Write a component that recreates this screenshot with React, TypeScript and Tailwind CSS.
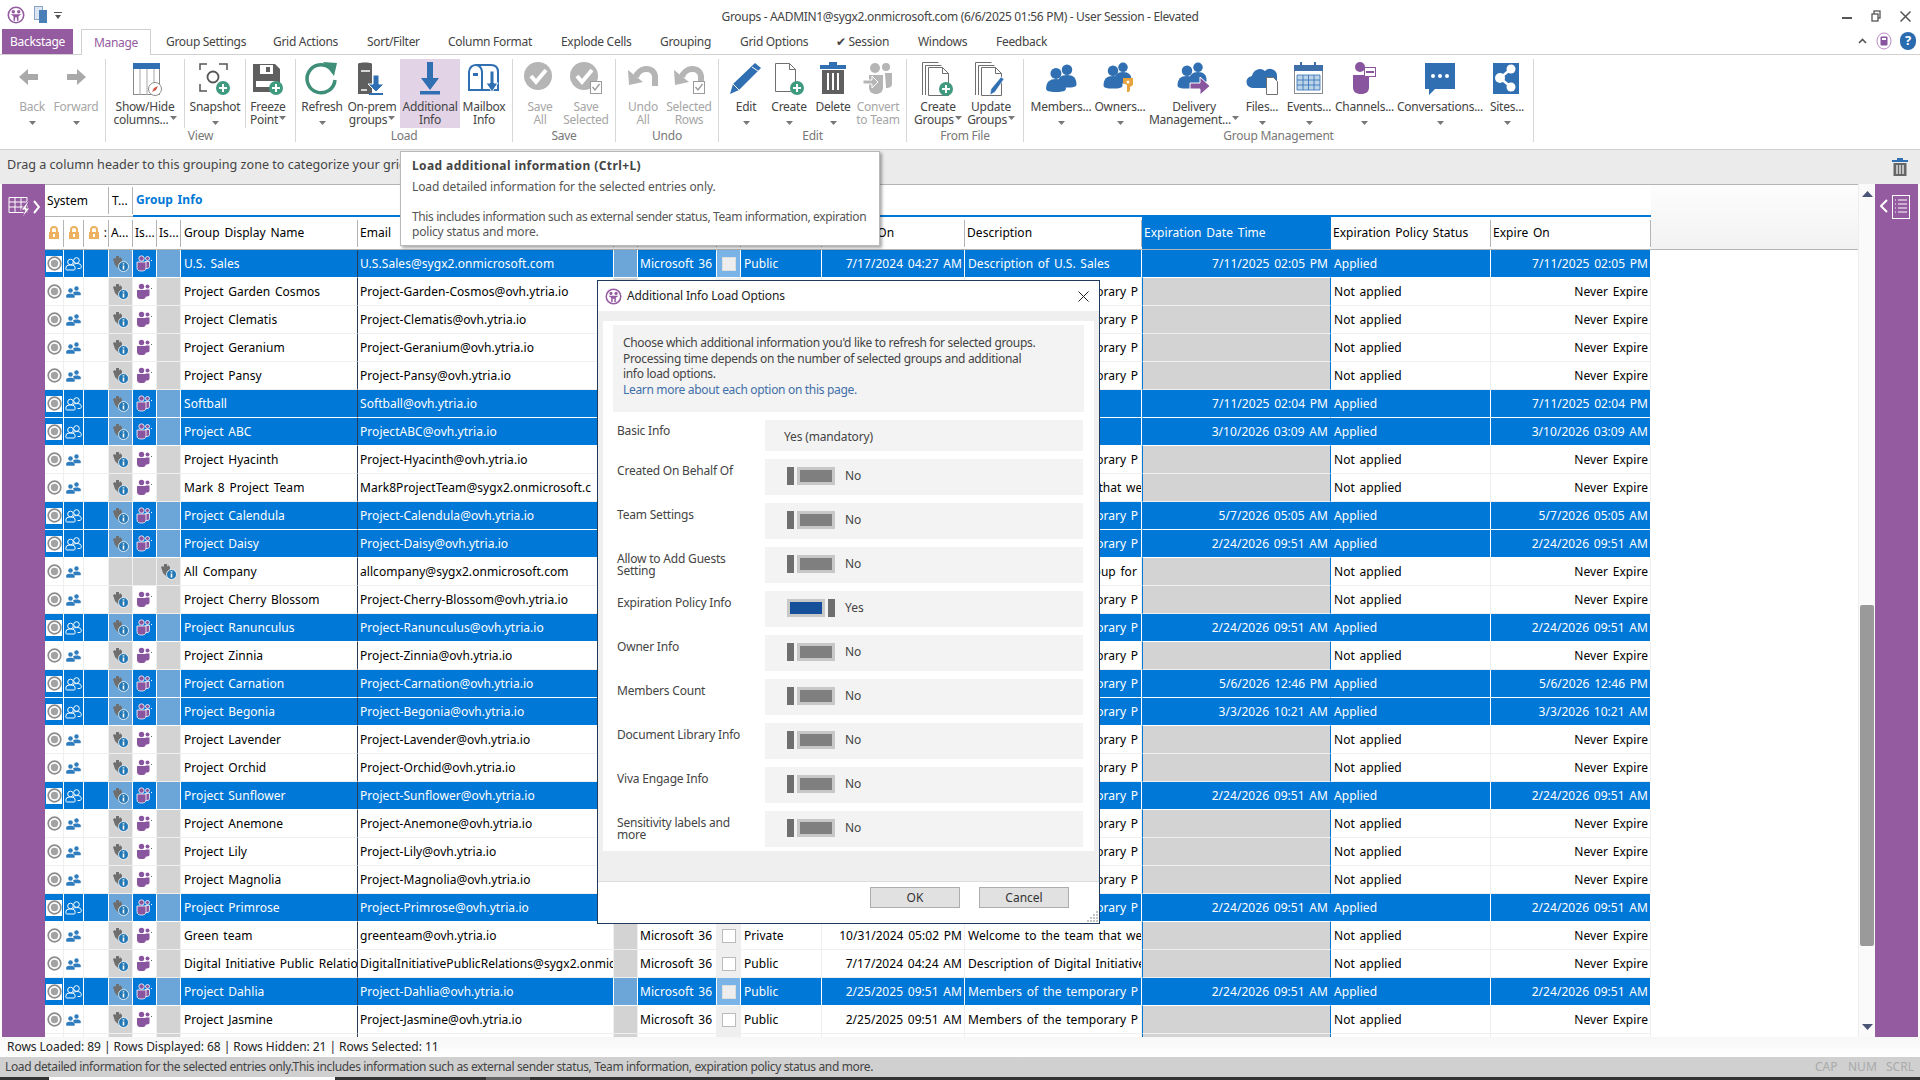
import React from 'react';
import clsx from 'clsx';

type Row = {
  name: string;
  email: string;
  sel?: boolean;
  exp?: string;
  date?: string;
  desc?: string;
  access?: string;
  company?: boolean;
};

const temp = 'Members of the temporary P';
const cols =
  'grid grid-cols-[19px_20px_25px_24px_24px_24px_177px_256px_24px_79px_24px_81px_143px_177px_189px_160px_160px]';

const rows: Row[] = [
  { name: 'U.S. Sales', email: 'U.S.Sales@sygx2.onmicrosoft.com', sel: true, exp: '7/11/2025 02:05 PM', date: '7/17/2024 04:27 AM', desc: 'Description of U.S. Sales' },
  { name: 'Project Garden Cosmos', email: 'Project-Garden-Cosmos@ovh.ytria.io' },
  { name: 'Project Clematis', email: 'Project-Clematis@ovh.ytria.io' },
  { name: 'Project Geranium', email: 'Project-Geranium@ovh.ytria.io' },
  { name: 'Project Pansy', email: 'Project-Pansy@ovh.ytria.io' },
  { name: 'Softball', email: 'Softball@ovh.ytria.io', sel: true, exp: '7/11/2025 02:04 PM', desc: 'Softball' },
  { name: 'Project ABC', email: 'ProjectABC@ovh.ytria.io', sel: true, exp: '3/10/2026 03:09 AM', desc: 'Project ABC' },
  { name: 'Project Hyacinth', email: 'Project-Hyacinth@ovh.ytria.io' },
  { name: 'Mark 8 Project Team', email: 'Mark8ProjectTeam@sygx2.onmicrosoft.c', desc: 'Welcome to the team that we' },
  { name: 'Project Calendula', email: 'Project-Calendula@ovh.ytria.io', sel: true, exp: '5/7/2026 05:05 AM' },
  { name: 'Project Daisy', email: 'Project-Daisy@ovh.ytria.io', sel: true, exp: '2/24/2026 09:51 AM' },
  { name: 'All Company', email: 'allcompany@sygx2.onmicrosoft.com', company: true, desc: 'The company-wide group for e' },
  { name: 'Project Cherry Blossom', email: 'Project-Cherry-Blossom@ovh.ytria.io' },
  { name: 'Project Ranunculus', email: 'Project-Ranunculus@ovh.ytria.io', sel: true, exp: '2/24/2026 09:51 AM' },
  { name: 'Project Zinnia', email: 'Project-Zinnia@ovh.ytria.io' },
  { name: 'Project Carnation', email: 'Project-Carnation@ovh.ytria.io', sel: true, exp: '5/6/2026 12:46 PM' },
  { name: 'Project Begonia', email: 'Project-Begonia@ovh.ytria.io', sel: true, exp: '3/3/2026 10:21 AM' },
  { name: 'Project Lavender', email: 'Project-Lavender@ovh.ytria.io' },
  { name: 'Project Orchid', email: 'Project-Orchid@ovh.ytria.io' },
  { name: 'Project Sunflower', email: 'Project-Sunflower@ovh.ytria.io', sel: true, exp: '2/24/2026 09:51 AM' },
  { name: 'Project Anemone', email: 'Project-Anemone@ovh.ytria.io' },
  { name: 'Project Lily', email: 'Project-Lily@ovh.ytria.io' },
  { name: 'Project Magnolia', email: 'Project-Magnolia@ovh.ytria.io' },
  { name: 'Project Primrose', email: 'Project-Primrose@ovh.ytria.io', sel: true, exp: '2/24/2026 09:51 AM' },
  { name: 'Green team', email: 'greenteam@ovh.ytria.io', access: 'Private', date: '10/31/2024 05:02 PM', desc: 'Welcome to the team that we' },
  { name: 'Digital Initiative Public Relatio', email: 'DigitalInitiativePublicRelations@sygx2.onmic', date: '7/17/2024 04:24 AM', desc: 'Description of Digital Initiative' },
  { name: 'Project Dahlia', email: 'Project-Dahlia@ovh.ytria.io', sel: true, exp: '2/24/2026 09:51 AM' },
  { name: 'Project Jasmine', email: 'Project-Jasmine@ovh.ytria.io' },
  { name: '', email: '' },
];

const Caret = ({ className = 'text-[#777]' }: { className?: string }) => (
  <svg width="7" height="4" viewBox="0 0 7 4" className={className}>
    <path d="M0 0h7L3.5 4z" fill="currentColor" />
  </svg>
);

const Plus = ({ x = 25, y = 25 }: { x?: number; y?: number }) => (
  <g>
    <circle cx={x} cy={y} r="7" fill="#3f9a80" />
    <path d={`M${x - 4} ${y}h8M${x} ${y - 4}v8`} stroke="#fff" strokeWidth="2" />
  </g>
);

const Person = ({ x, y, s = 1, fill = '#2f6fb2' }: { x: number; y: number; s?: number; fill?: string }) => (
  <g transform={`translate(${x} ${y}) scale(${s})`} fill={fill}>
    <circle cx="0" cy="-6" r="5" />
    <path d="M-9 8c0-6 3-9 9-9s9 3 9 9c0 2-3 3-9 3s-9-1-9-3z" />
  </g>
);

const Logo = ({ size = 18 }: { size?: number }) => (
  <svg width={size} height={size} viewBox="0 0 18 18">
    <circle cx="9" cy="9" r="7.7" fill="#fff" stroke="#955ba0" strokeWidth="1.6" />
    <circle cx="6.3" cy="5.8" r="1.7" fill="#955ba0" />
    <circle cx="11.7" cy="5.8" r="1.7" fill="#955ba0" />
    <path d="M3.5 8.2h11l-3 2v4.6h-1.6v-3.4H8.100v3.400H6.500v-4.600z" fill="#955ba0" />
  </svg>
);

const Radio = ({ sel }: { sel?: boolean }) => (
  <div className={clsx('w-[16px] h-[16px] flex items-center justify-center', sel && 'bg-white')}>
    <svg width="15" height="15" viewBox="0 0 15 15">
      <circle cx="7.5" cy="7.500" r="6.300" fill="none" stroke="#8d8d8d" strokeWidth="1.700" />
      <circle cx="7.500" cy="7.500" r="3.700" fill="#a3a3a3" />
    </svg>
  </div>
);

const People = ({ sel }: { sel?: boolean }) =>
  sel ? (
    <svg width="17" height="14" viewBox="0 0 17 14" fill="none" stroke="#fff" strokeWidth="1">
      <circle cx="11.500" cy="3.500" r="2.800" />
      <path d="M8 7.500c1-1 6-1.500 7.500 0 1 1 1 3.500 0 3.800-1 .3-2 .3-3 .2" />
      <circle cx="5.500" cy="5" r="2.800" />
      <path d="M1.500 9c1-1.300 7-1.300 8 0 .8 1.200.8 3.500 0 4h-8c-.8-.5-.8-2.800 0-4z" />
    </svg>
  ) : (
    <svg width="15" height="12" viewBox="0 0 15 12" fill="#2f7dbd">
      <circle cx="10.500" cy="2.500" r="2.200" />
      <path d="M7 6.800c.8-1.500 6-1.700 7.500 0 .5.800.5 2.200-.2 2.500H8.500z" />
      <circle cx="4.500" cy="4.500" r="2.300" />
      <path d="M.4 9c.8-1.700 7-1.700 8 0 .5.800.5 2.500 0 2.700H.6c-.6-.2-.7-1.900-.2-2.700z" />
    </svg>
  );

const ShieldInfo = () => (
  <svg width="17" height="17" viewBox="0 0 17 17">
    <path d="M1 4l2-1 1 1V1h3v3l1-2 2 2v3L7 14 3 10z" fill="#6f6f6f" />
    <circle cx="11.500" cy="11.500" r="5" fill="#2478b5" stroke="#fff" strokeWidth=".8" />
    <path d="M11.500 8.200v1.300M11.500 10.500v4" stroke="#fff" strokeWidth="1.600" />
  </svg>
);

const Teams = ({ sel }: { sel?: boolean }) => (
  <svg width="17" height="17" viewBox="0 0 17 17">
    <circle cx="5.500" cy="3.500" r="2.700" fill="#8a559f" stroke={sel ? '#fff' : 'none'} strokeWidth=".8" />
    <circle cx="11.500" cy="3.500" r="2" fill="#8a559f" stroke={sel ? '#fff' : 'none'} strokeWidth=".8" />
    <path d="M9.500 6.500h4v5c0 2-2 2-4 2z" fill="#8a559f" stroke={sel ? '#fff' : 'none'} strokeWidth=".8" />
    <path d="M1 7h9v5.500c0 3-2 3.500-4.500 3.500S1 15.500 1 12.500z" fill="#8a559f" stroke={sel ? '#fff' : 'none'} strokeWidth=".8" />
    <rect x="15" y="5" width="1" height="1" fill={sel ? '#fff' : '#666'} />
  </svg>
);

const Lock = () => (
  <svg width="12" height="14" viewBox="0 0 12 14">
    <path d="M3 6V4a3 3 0 016 0v2" fill="none" stroke="#ecb25f" strokeWidth="2" />
    <rect x="1" y="6" width="10" height="7" fill="#ecb25f" />
    <rect x="5" y="8" width="2" height="3" fill="#fff" />
  </svg>
);

const CheckCircle = () => (
  <g>
    <circle cx="14" cy="14" r="14" fill="#b5b5b5" />
    <path d="M7 14l5 6 10-12" fill="none" stroke="#fff" strokeWidth="4" />
  </g>
);

const MiniCheck = () => (
  <g>
    <rect x="20.500" y="19.500" width="11" height="12" fill="#fff" stroke="#9a9a9a" />
    <path d="M22.500 25l2.500 3 4.500-6" fill="none" stroke="#9a9a9a" strokeWidth="1.300" />
  </g>
);

const UndoArrow = () => (
  <g fill="#b5b5b5">
    <path d="M9 15c2-9 17-12 19-1v10" fill="none" stroke="#b5b5b5" strokeWidth="6" />
    <path d="M1 8l1 15 14-3z" />
  </g>
);

const Doc = ({ x = 2, y = 1 }: { x?: number; y?: number }) => (
  <path
    transform={`translate(${x} ${y})`}
    d="M.5.500h14l6 6v22H.5zM14.500.500v6h6"
    fill="#fff"
    stroke="#6f6f6f"
  />
);

const Ic = ({ children }: { children: React.ReactNode }) => (
  <svg width="32" height="32" viewBox="0 0 32 32" className="overflow-visible">
    {children}
  </svg>
);

const icons: Record<string, React.ReactNode> = {
  back: (
    <Ic>
      <path d="M16 8L7 16l9 8v-5h10v-6H16z" fill="#a9a9a9" transform="translate(-4 -1)" />
    </Ic>
  ),
  forward: (
    <Ic>
      <path d="M18 7l9 8-9 8v-5H8v-6h10z" fill="#a9a9a9" transform="translate(-1 0)" />
    </Ic>
  ),
  show: (
    <Ic>
      <rect x="4.500" y="1.500" width="26" height="31" fill="#fff" stroke="#8c8c8c" />
      <rect x="4" y="1" width="27" height="6" fill="#2f6fb2" />
      <path d="M11 7v26M18 7v26M25 7v20" stroke="#a8a8a8" />
      <circle cx="26" cy="27" r="6.500" fill="#fff" stroke="#8c8c8c" />
      <path d="M29 24l-4 2-2 4 4-2z" fill="#c9533c" />
    </Ic>
  ),
  snapshot: (
    <Ic>
      <path d="M1 8V2h7M20 2h8v6M1 22v7h7" fill="none" stroke="#555" strokeWidth="1.500" />
      <circle cx="14" cy="15" r="5.500" fill="#fff" stroke="#555" strokeWidth="1.800" />
      <Plus x={24} y={26} />
    </Ic>
  ),
  freeze: (
    <Ic>
      <path d="M1 2h22l5 5v23H1z" fill="#5f5f5f" />
      <rect x="8" y="3" width="13" height="9" fill="#fff" />
      <rect x="14" y="5" width="4" height="5" fill="#5f5f5f" />
      <rect x="4" y="19" width="21" height="6" fill="#fff" />
      <Plus x={24} y={26} />
    </Ic>
  ),
  refresh: (
    <Ic>
      <path d="M24 6A14 14 0 1029 18" fill="none" stroke="#3f8f78" strokeWidth="3.500" />
      <path d="M17 0l14 1-3 13z" fill="#3f8f78" />
    </Ic>
  ),
  onprem: (
    <Ic>
      <path d="M2 2c0-2 14-2 14 0v30H2z" fill="#5f5f5f" />
      <path d="M5 9h9M5 28h6" stroke="#fff" strokeWidth="1.500" />
      <path d="M17 13h6v9h5l-8 8-8-8h5z" fill="#2f6fb2" stroke="#fff" />
      <rect x="13" y="31" width="14" height="2" fill="#2f6fb2" />
    </Ic>
  ),
  additional: (
    <Ic>
      <path d="M12 0h6v16h6l-9 12-9-12h6z" fill="#2f6fb2" transform="translate(1 0)" />
      <rect x="6" y="29" width="20" height="3.500" fill="#2f6fb2" />
    </Ic>
  ),
  mailbox: (
    <Ic>
      <path d="M1 28V10c0-5 4-7 7-7h15c4 0 7 2 7 7v18z" fill="#fff" stroke="#2f6fb2" strokeWidth="2" />
      <path d="M14 28V10c0-4-3-7-6-7" fill="none" stroke="#2f6fb2" strokeWidth="2" />
      <rect x="5" y="11" width="5" height="3" fill="#2f6fb2" />
      <path d="M22 9h4v12h4l-6 9-6-9h4z" fill="#2f6fb2" stroke="#fff" />
    </Ic>
  ),
  saveAll: (
    <Ic>
      <CheckCircle />
    </Ic>
  ),
  saveSel: (
    <Ic>
      <CheckCircle />
      <MiniCheck />
    </Ic>
  ),
  undoAll: (
    <Ic>
      <UndoArrow />
    </Ic>
  ),
  undoSel: (
    <Ic>
      <UndoArrow />
      <MiniCheck />
    </Ic>
  ),
  edit: (
    <Ic>
      <path d="M25 1l6 5L9 28 0 32l3-10z" fill="#2f6fb2" />
      <path d="M3 22l6 6" stroke="#fff" />
      <path d="M22 5l6 4" stroke="#fff" />
    </Ic>
  ),
  create: (
    <Ic>
      <Doc x={2} y={1} />
      <Plus x={24} y={26} />
    </Ic>
  ),
  del: (
    <Ic>
      <rect x="12" y="0" width="8" height="3" fill="#2f6fb2" />
      <rect x="3" y="3" width="26" height="4" fill="#2f6fb2" />
      <rect x="5" y="8" width="22" height="24" fill="#5f5f5f" />
      <path d="M11 11v17M16 11v17M21 11v17" stroke="#fff" strokeWidth="2" />
    </Ic>
  ),
  convert: (
    <Ic>
      <circle cx="13" cy="6" r="5" fill="#b5b5b5" />
      <circle cx="24" cy="5" r="4" fill="#b5b5b5" />
      <path d="M7 13h14v12c0 5-3 7-7 7s-7-2-7-7z" fill="#b5b5b5" />
      <path d="M23 11h7v11c0 3-3 4-6 4z" fill="#b5b5b5" />
      <path d="M1 18h9v-4l6 6-6 6v-4H1z" fill="#b5b5b5" stroke="#fff" />
    </Ic>
  ),
  createGroups: (
    <Ic>
      <path d="M.5 33V.5h16M3.500 33V3.500h16" fill="none" stroke="#6f6f6f" />
      <Doc x={6} y={5} />
      <Plus x={24} y={27} />
    </Ic>
  ),
  updateGroups: (
    <Ic>
      <path d="M.5 33V.5h16M3.500 33V3.500h16" fill="none" stroke="#6f6f6f" />
      <Doc x={6} y={5} />
      <path d="M26 15l3 2-9 13-5 3 1-6z" fill="#2f6fb2" stroke="#fff" strokeWidth=".6" />
    </Ic>
  ),
  members: (
    <Ic>
      <Person x={22} y={14} s={1.05} />
      <Person x={11} y={18} s={1.1} />
    </Ic>
  ),
  owners: (
    <Ic>
      <Person x={19} y={11} s={0.95} />
      <Person x={9} y={15} s={1.05} />
      <path d="M19 16h10v7l-3 2v3l-1 2h-2v-7l-4-2z" fill="#e8a33d" />
      <circle cx="24" cy="20" r="1.500" fill="#fff" />
    </Ic>
  ),
  delivery: (
    <Ic>
      <Person x={20} y={11} s={0.95} />
      <Person x={9} y={15} s={1.05} />
      <path d="M12 21h10v-6l10 9-10 9v-6H12z" fill="#8a559f" stroke="#fff" />
    </Ic>
  ),
  files: (
    <Ic>
      <path d="M7 26a6 6 0 01-1-12 8 8 0 0113-5 7 7 0 0112 5v12z" fill="#2f6fb2" />
      <path d="M20.500 15.500h7l4 4v13h-11z" fill="#fff" stroke="#6f6f6f" />
    </Ic>
  ),
  events: (
    <Ic>
      <rect x="1.500" y="3.500" width="28" height="28" fill="#fff" stroke="#8c8c8c" />
      <rect x="1" y="3" width="29" height="6" fill="#3f6fa8" />
      <rect x="7" y="0" width="2" height="6" fill="#3f6fa8" />
      <rect x="21" y="0" width="2" height="6" fill="#3f6fa8" />
      <path d="M4 13h23v15H4zM4 18h23M4 23h23M10 13v15M15.500 13v15M21 13v15" fill="#bcd3ea" stroke="#2f6fb2" strokeWidth=".8" />
    </Ic>
  ),
  channels: (
    <Ic>
      <circle cx="11" cy="5" r="5" fill="#8a559f" />
      <path d="M4 13h16v12c0 5-3 7-8 7s-8-2-8-7z" fill="#8a559f" />
      <rect x="15.500" y="5.500" width="11" height="9" fill="#fff" stroke="#8a559f" />
      <rect x="17" y="9" width="8" height="2" fill="#8a559f" />
    </Ic>
  ),
  conversations: (
    <Ic>
      <path d="M1 1h30v26H11l-6 6v-6H1z" fill="#2f6fb2" />
      <circle cx="9" cy="14" r="2" fill="#fff" />
      <circle cx="16" cy="14" r="2" fill="#fff" />
      <circle cx="23" cy="14" r="2" fill="#fff" />
    </Ic>
  ),
  sites: (
    <Ic>
      <rect x="2" y="1" width="26" height="31" fill="#2f6fb2" />
      <path d="M20 7L9 16l11 9" fill="none" stroke="#fff" strokeWidth="2.500" />
      <circle cx="20" cy="7" r="4.500" fill="#fff" />
      <circle cx="9" cy="16" r="5" fill="#fff" />
      <circle cx="20" cy="25" r="4.500" fill="#fff" />
    </Ic>
  ),
};

type Btn = {
  icon: string;
  l1: string;
  l2?: string;
  w: string;
  off?: boolean;
  active?: boolean;
  inlineCaret?: boolean;
  noCaret?: boolean;
};

const RibbonBtn = ({ b }: { b: Btn }) => (
  <div
    className={clsx(
      'h-[69px] pt-[3px] shrink-0 flex flex-col items-center whitespace-nowrap text-[12px] leading-[13px] tracking-[-0.25px]',
      b.w,
      b.off ? 'text-[#a6a6a6]' : 'text-[#444]',
      b.active && 'bg-[#e3d3e6]'
    )}
  >
    <div className="h-[32px] flex items-center justify-center">{icons[b.icon]}</div>
    <div className="mt-[6px] h-[13px]">{b.l1}</div>
    <div className="h-[13px] flex items-center gap-[1px]">
      {b.l2}
      {b.l2 && b.inlineCaret && <Caret className="text-[#777] mb-[4px]" />}
      {!b.l2 && !b.noCaret && <Caret className="text-[#777] mt-[6px]" />}
    </div>
  </div>
);

const RibbonGroup = ({ label, w, className, children }: { label?: string; w: string; className?: string; children: React.ReactNode }) => (
  <div className={clsx('h-[83px] shrink-0 border-r border-[#d8d8d8] flex flex-col', w)}>
    <div className={clsx('h-[69px] flex', className)}>{children}</div>
    <div className="h-[14px] pt-[1px] text-center text-[12px] leading-[14px] tracking-[-0.25px] text-[#777]">{label}</div>
  </div>
);

const Sep = () => <div className="w-px h-[69px] bg-[#d8d8d8] shrink-0" />;

const Ribbon = () => (
  <div className="h-[95px] border-b border-[#d0d0d0] flex pt-[4px] bg-white">
    <RibbonGroup w="w-[106px]" className="pl-[10px]">
      <RibbonBtn b={{ icon: 'back', l1: 'Back', w: 'w-[44px]', off: true }} />
      <RibbonBtn b={{ icon: 'forward', l1: 'Forward', w: 'w-[44px]', off: true }} />
    </RibbonGroup>
    <RibbonGroup w="w-[190px]" label="View">
      <RibbonBtn b={{ icon: 'show', l1: 'Show/Hide', l2: 'columns...', inlineCaret: true, w: 'w-[78px]' }} />
      <Sep />
      <RibbonBtn b={{ icon: 'snapshot', l1: 'Snapshot', w: 'w-[60px]' }} />
      <Sep />
      <RibbonBtn b={{ icon: 'freeze', l1: 'Freeze', l2: 'Point', inlineCaret: true, w: 'w-[44px]' }} />
    </RibbonGroup>
    <RibbonGroup w="w-[217px]" label="Load">
      <RibbonBtn b={{ icon: 'refresh', l1: 'Refresh', w: 'w-[52px]' }} />
      <RibbonBtn b={{ icon: 'onprem', l1: 'On-prem', l2: 'groups', inlineCaret: true, w: 'w-[48px]' }} />
      <div className="w-[4px]" />
      <RibbonBtn b={{ icon: 'additional', l1: 'Additional', l2: 'Info', w: 'w-[60px]', active: true }} />
      <RibbonBtn b={{ icon: 'mailbox', l1: 'Mailbox', l2: 'Info', w: 'w-[48px]' }} />
    </RibbonGroup>
    <RibbonGroup w="w-[103px]" label="Save">
      <RibbonBtn b={{ icon: 'saveAll', l1: 'Save', l2: 'All', w: 'w-[54px]', off: true }} />
      <RibbonBtn b={{ icon: 'saveSel', l1: 'Save', l2: 'Selected', w: 'w-[38px]', off: true }} />
    </RibbonGroup>
    <RibbonGroup w="w-[103px]" label="Undo">
      <RibbonBtn b={{ icon: 'undoAll', l1: 'Undo', l2: 'All', w: 'w-[54px]', off: true }} />
      <RibbonBtn b={{ icon: 'undoSel', l1: 'Selected', l2: 'Rows', w: 'w-[38px]', off: true }} />
    </RibbonGroup>
    <RibbonGroup w="w-[188px]" label="Edit">
      <RibbonBtn b={{ icon: 'edit', l1: 'Edit', w: 'w-[54px]' }} />
      <RibbonBtn b={{ icon: 'create', l1: 'Create', w: 'w-[32px]' }} />
      <RibbonBtn b={{ icon: 'del', l1: 'Delete', w: 'w-[56px]' }} />
      <RibbonBtn b={{ icon: 'convert', l1: 'Convert', l2: 'to Team', w: 'w-[34px]', off: true }} />
    </RibbonGroup>
    <RibbonGroup w="w-[117px]" label="From File">
      <RibbonBtn b={{ icon: 'createGroups', l1: 'Create', l2: 'Groups', inlineCaret: true, w: 'w-[62px]' }} />
      <RibbonBtn b={{ icon: 'updateGroups', l1: 'Update', l2: 'Groups', inlineCaret: true, w: 'w-[44px]' }} />
    </RibbonGroup>
    <RibbonGroup w="w-[510px]" label="Group Management">
      <RibbonBtn b={{ icon: 'members', l1: 'Members...', w: 'w-[74px]' }} />
      <RibbonBtn b={{ icon: 'owners', l1: 'Owners...', w: 'w-[44px]' }} />
      <RibbonBtn b={{ icon: 'delivery', l1: 'Delivery', l2: 'Management...', inlineCaret: true, w: 'w-[104px]' }} />
      <RibbonBtn b={{ icon: 'files', l1: 'Files...', w: 'w-[32px]' }} />
      <RibbonBtn b={{ icon: 'events', l1: 'Events...', w: 'w-[62px]' }} />
      <RibbonBtn b={{ icon: 'channels', l1: 'Channels...', w: 'w-[49px]' }} />
      <RibbonBtn b={{ icon: 'conversations', l1: 'Conversations...', w: 'w-[102px]' }} />
      <RibbonBtn b={{ icon: 'sites', l1: 'Sites...', w: 'w-[32px]' }} />
    </RibbonGroup>
  </div>
);

const tabs = [
  { label: 'Group Settings', w: 'w-[107px]' },
  { label: 'Grid Actions', w: 'w-[94px]' },
  { label: 'Sort/Filter', w: 'w-[81px]' },
  { label: 'Column Format', w: 'w-[113px]' },
  { label: 'Explode Cells', w: 'w-[99px]' },
  { label: 'Grouping', w: 'w-[80px]' },
  { label: 'Grid Options', w: 'w-[96px]' },
  { label: '✔ Session', w: 'w-[82px]' },
  { label: 'Windows', w: 'w-[78px]' },
  { label: 'Feedback', w: 'w-[78px]' },
];

const TitleBar = () => (
  <div className="h-[29px] grid grid-cols-[1fr_auto_1fr] items-center bg-white">
    <div className="flex items-center pl-[7px] gap-[9px]">
      <Logo />
      <svg width="14" height="18" viewBox="0 0 14 18">
        <rect x=".5" y=".5" width="8" height="13" fill="#dbe6f2" stroke="#8aa4c4" />
        <rect x="5" y="4" width="8" height="13" fill="#4a7fb8" />
      </svg>
      <svg width="8" height="8" viewBox="0 0 8 8" className="-ml-[3px]">
        <path d="M0 1h8v1H0zM1 4h6L4 8z" fill="#555" />
      </svg>
    </div>
    <div className="text-[12px] text-[#444] pt-[4px] tracking-[-0.32px]">Groups - AADMIN1@sygx2.onmicrosoft.com (6/6/2025 01:56 PM) - User Session - Elevated</div>
    <div className="flex justify-end items-center gap-[19px] pr-[9px] mt-[3px] text-[#555]">
      <svg width="10" height="2" viewBox="0 0 10 2" className="mt-[4px]">
        <rect width="10" height="2" fill="#555" />
      </svg>
      <svg width="10" height="12" viewBox="0 0 10 12" fill="none" stroke="#555" strokeWidth="1.300">
        <rect x="3" y="1" width="6" height="7" />
        <rect x="1" y="4" width="6" height="7" fill="#fff" />
      </svg>
      <svg width="11" height="11" viewBox="0 0 11 11" stroke="#555" strokeWidth="1.500">
        <path d="M.5.500l10 10M10.500.500l-10 10" />
      </svg>
    </div>
  </div>
);

const TabRow = () => (
  <div className="h-[26px] flex border-b border-[#d0d0d0] text-[12px] text-[#444] tracking-[-0.3px] relative">
    <div className="ml-[2px] w-[71px] h-[25px] bg-[#955ba0] text-white flex items-center justify-center">Backstage</div>
    <div className="ml-[8px] w-[70px] h-[26px] bg-white border border-b-0 border-[#d0d0d0] text-[#955ba0] flex items-center justify-center">Manage</div>
    <div className="w-[15px]" />
    {tabs.map(t => (
      <div key={t.label} className={clsx('h-[25px] flex items-center whitespace-nowrap', t.w)}>
        {t.label}
      </div>
    ))}
    <div className="ml-auto flex items-center gap-[8px] pr-[4px] -mt-[2px]">
      <svg width="9" height="6" viewBox="0 0 9 6" fill="none" stroke="#555" strokeWidth="1.600">
        <path d="M1 5l3.500-3.500L8 5" />
      </svg>
      <svg width="16" height="18" viewBox="0 0 16 18" className="ml-[1px]">
        <ellipse cx="8" cy="9" rx="7" ry="8" fill="#fff" stroke="#b98ac2" />
        <rect x="4.500" y="4.500" width="7" height="9" rx="1" fill="#8a559f" />
        <rect x="6" y="6" width="4" height="2" fill="#fff" />
      </svg>
      <div className="w-[16px] h-[18px] rounded-full bg-[#2a6bb0] text-white font-bold text-[13px] flex items-center justify-center">?</div>
    </div>
  </div>
);

const GroupBar = () => (
  <div className="h-[34px] bg-[#ebebeb] flex items-center pl-[7px] pr-[12px] text-[12.6px] text-[#444]">
    <div className="pb-[3px]">Drag a column header to this grouping zone to categorize your grid</div>
    <svg width="16" height="18" viewBox="0 0 16 18" className="ml-auto">
      <rect x="5" y="0" width="6" height="2" fill="#2f6fb2" />
      <rect x="0" y="2" width="16" height="2" fill="#2f6fb2" />
      <rect x="1.500" y="5" width="13" height="13" fill="#666" />
      <path d="M5 7v9M8 7v9M11 7v9" stroke="#fff" strokeWidth="1.200" />
    </svg>
  </div>
);

const HCell = ({ children, className }: { children?: React.ReactNode; className?: string }) => (
  <div className="h-[32px] flex items-center overflow-hidden">
    <div className={clsx('h-[27px] w-full border-r border-[#b4b4b4] flex items-center pl-[2px] whitespace-nowrap overflow-hidden', className)}>{children}</div>
  </div>
);

const GridHeader = () => (
  <div className="flex border-t border-b border-[#b4b4b4] h-[66px] bg-gradient-to-b from-[#fdfdfd] to-[#f2f2f2]">
    <div className="w-[1606px] shrink-0 bg-white text-[12px] text-black tracking-[0.05px] [word-spacing:1.5px]">
      <div className="h-[32px] grid grid-cols-[64px_24px_1518px]">
        <div className="border-b border-[#b4b4b4] flex items-center">
          <div className="h-[27px] w-full border-r border-[#b4b4b4] flex items-center pl-[2px]">System</div>
        </div>
        <div className="border-b border-[#b4b4b4] flex items-center">
          <div className="h-[27px] w-full border-r border-[#b4b4b4] flex items-center pl-[3px]">T...</div>
        </div>
        <div className="border-b-2 border-[#0078d7] flex items-center pl-[3px] font-bold text-[#0078d7]">Group Info</div>
      </div>
      <div className={clsx(cols, 'h-[32px]')}>
        <HCell className="pl-[3px]"><Lock /></HCell>
        <HCell className="pl-[4px]"><Lock /></HCell>
        <HCell className="pl-[4px] pr-[1px] justify-between"><Lock />:</HCell>
        <HCell>A...</HCell>
        <HCell>Is...</HCell>
        <HCell>Is...</HCell>
        <HCell className="pl-[3px]">Group Display Name</HCell>
        <HCell>Email</HCell>
        <HCell />
        <HCell />
        <HCell />
        <HCell />
        <HCell className="pl-[6px]">Created On</HCell>
        <HCell>Description</HCell>
        <div className="h-[32px] bg-[#0078d7] text-white flex items-center pl-[2px]">Expiration Date Time</div>
        <HCell>Expiration Policy Status</HCell>
        <HCell>Expire On</HCell>
      </div>
    </div>
  </div>
);

const Cell = ({ sel, grey, className, children }: { sel?: boolean; grey?: boolean; className?: string; children?: React.ReactNode }) => (
  <div
    className={clsx(
      'h-[28px] border-b border-r flex items-center whitespace-nowrap overflow-hidden',
      sel ? 'border-white' : 'border-[#efefef]',
      grey && (sel ? 'bg-[#6ca6d9]' : 'bg-[#d3d3d3]'),
      className
    )}
  >
    {children}
  </div>
);

const GridRow = ({ r }: { r: Row }) => {
  const sel = r.sel;
  return (
    <div className={clsx(cols, 'text-[12px] tracking-[0.05px] [word-spacing:1.5px]', sel ? 'bg-[#0078d7] text-white' : 'bg-white text-black')}>
      <Cell sel={sel} className="justify-center"><Radio sel={sel} /></Cell>
      <Cell sel={sel} className="justify-center"><People sel={sel} /></Cell>
      <Cell sel={sel} />
      <Cell sel={sel} grey className="justify-center">{!r.company && <ShieldInfo />}</Cell>
      <Cell sel={sel} grey={r.company} className="justify-center">{!r.company && <Teams sel={sel} />}</Cell>
      <Cell sel={sel} grey className="justify-center">{r.company && <ShieldInfo />}</Cell>
      <Cell sel={sel} className="pl-[3px] pt-[1px] border-r-[#2b3a55]">{r.name}</Cell>
      <Cell sel={sel} className="pl-[2px] pt-[1px]">{r.email}</Cell>
      <Cell sel={sel} grey />
      <Cell sel={sel} className="pl-[2px] pt-[1px]">{r.name && 'Microsoft 36'}</Cell>
      <Cell sel={sel} className={clsx('justify-center', sel ? 'bg-[#7ab4e6]' : 'bg-[#efefef]')}>
        <div className={clsx('w-[14px] h-[14px] border', sel ? 'bg-[#eeeeee] border-[#dddddd]' : 'bg-white border-[#bbbbbb]')} />
      </Cell>
      <Cell sel={sel} className="pl-[3px] pt-[1px]">{r.access ?? 'Public'}</Cell>
      <Cell sel={sel} className="justify-end pr-[2px] pt-[1px]">{r.date ?? '2/25/2025 09:51 AM'}</Cell>
      <Cell sel={sel} className="pl-[3px] pt-[1px]">{r.desc ?? temp}</Cell>
      <Cell sel={sel} grey={!sel} className={clsx('justify-end pr-[2px] pt-[1px] border-l border-l-[#0078d7] border-r-[#0078d7]', sel && 'bg-[#0078d7]')}>{r.exp}</Cell>
      <Cell sel={sel} className="pl-[3px] pt-[1px]">{r.name ? (sel ? 'Applied' : 'Not applied') : ''}</Cell>
      <Cell sel={sel} className="justify-end pr-[2px] pt-[1px]">{r.name ? (sel ? r.exp : 'Never Expire') : ''}</Cell>
    </div>
  );
};

const Toggle = ({ on }: { on?: boolean }) => (
  <div className="w-[48px] h-[18px] flex gap-[3px]">
    {!on && <div className="w-[7px] bg-[#6f6f6f]" />}
    <div className="w-[38px] bg-[#c8c8c8] p-[3px]">
      <div className={clsx('h-full', on ? 'bg-[#17509a]' : 'bg-[#7f7f7f]')} />
    </div>
    {on && <div className="w-[7px] bg-[#6f6f6f]" />}
  </div>
);

const options: { label: React.ReactNode; on?: boolean }[] = [
  { label: 'Created On Behalf Of' },
  { label: 'Team Settings' },
  { label: <>Allow to Add Guests<br />Setting</> },
  { label: 'Expiration Policy Info', on: true },
  { label: 'Owner Info' },
  { label: 'Members Count' },
  { label: 'Document Library Info' },
  { label: 'Viva Engage Info' },
  { label: <>Sensitivity labels and<br />more</> },
];

const Dialog = () => (
  <div className="absolute left-[597px] top-[280px] w-[503px] h-[644px] z-20 bg-white border border-[#1f3a5a] flex flex-col text-[12px] text-[#444]">
    <div className="h-[30px] flex items-center pl-[7px] pr-[10px] gap-[5px] shrink-0">
      <Logo size={17} />
      <div className="text-[#222] tracking-[-0.15px]">Additional Info Load Options</div>
      <svg width="11" height="11" viewBox="0 0 11 11" stroke="#222" className="ml-auto">
        <path d="M.5.500l10 10M10.500.500l-10 10" />
      </svg>
    </div>
    <div className="h-[571px] bg-[#efefef] pt-[10px] px-[5px] border-b border-[#dddddd] shrink-0">
      <div className="h-[530px] bg-white pt-[4px] px-[10px]">
        <div className="h-[87px] bg-[#f3f3f3] pt-[10px] pl-[10px] leading-[15.5px] tracking-[-0.32px]">
          Choose which additional information you'd like to refresh for selected groups.
          <br />
          Processing time depends on the number of selected groups and additional
          <br />
          info load options.
          <br />
          <span className="text-[#3f6fa8]">Learn more about each option on this page.</span>
        </div>
        <div className="mt-[8px] flex h-[31px]">
          <div className="w-[152px] pl-[4px] pt-[5px] leading-[12px] tracking-[-0.2px]">Basic Info</div>
          <div className="w-[318px] bg-[#f3f3f3] pl-[19px] flex items-center pt-[2px] tracking-[-0.15px]">Yes (mandatory)</div>
        </div>
        {options.map((o, i) => (
          <div key={i} className="mt-[8px] flex h-[36px]">
            <div className="w-[152px] pl-[4px] pt-[6px] leading-[12px] tracking-[-0.2px]">{o.label}</div>
            <div className="w-[318px] bg-[#f3f3f3] pl-[22px] pb-[2px] flex items-center gap-[10px]">
              <Toggle on={o.on} />
              {o.on ? 'Yes' : 'No'}
            </div>
          </div>
        ))}
      </div>
    </div>
    <div className="flex-1 relative flex justify-end items-start pt-[5px] pr-[30px] gap-[19px]">
      <div className="w-[90px] h-[21px] bg-[#e1e1e1] border border-[#adadad] flex items-center justify-center text-[#333]">OK</div>
      <div className="w-[90px] h-[21px] bg-[#e1e1e1] border border-[#adadad] flex items-center justify-center text-[#333]">Cancel</div>
      <svg width="12" height="12" viewBox="0 0 12 12" className="absolute right-0 bottom-0" fill="#c4c4c4">
        <path d="M9 0h2v2H9zM6 3h2v2H6zM9 3h2v2H9zM3 6h2v2H3zM6 6h2v2H6zM9 6h2v2H9zM0 9h2v2H0zM3 9h2v2H3zM6 9h2v2H6zM9 9h2v2H9z" />
      </svg>
    </div>
  </div>
);

const Tooltip = () => (
  <div className="absolute left-[400px] top-[151px] w-[480px] h-[95px] z-30 bg-white border border-[#b9b9b9] shadow-[2px_2px_3px_rgba(0,0,0,0.35)] pl-[11px] pt-[6px] text-[12px] text-[#555] whitespace-nowrap">
    <div className="font-bold text-[#444] leading-[15px] tracking-[0.4px]">Load additional information (Ctrl+L)</div>
    <div className="mt-[6px] leading-[15px] tracking-[-0.1px]">Load detailed information for the selected entries only.</div>
    <div className="mt-[15px] leading-[15px] tracking-[-0.38px]">This includes information such as external sender status, Team information, expiration</div>
    <div className="leading-[15px] tracking-[-0.2px]">policy status and more.</div>
  </div>
);

export default function App() {
  return (
    <div className="relative w-[1920px] h-[1080px] overflow-hidden bg-white flex flex-col font-['Noto_Sans',sans-serif]">
      <TitleBar />
      <TabRow />
      <Ribbon />
      <GroupBar />

      <div className="h-[853px] flex mx-[2px] shrink-0">
        <div className="w-[43px] bg-[#955ba0] shrink-0 pt-[11px] pl-[6px] flex items-start gap-[1px]">
          <svg width="32" height="24" viewBox="0 0 32 24" fill="none" stroke="#fff" strokeWidth="1">
            <path d="M1 2.500h18v15H1zM1 7h18M1 12h16M7 2.500v15M13 2.500v13" />
            <path d="M20 6l-7 9h4l-3 8 8-10h-4l3-7z" fill="#fff" stroke="#955ba0" />
            <path d="M26 6l5 6-5 6" strokeWidth="2" />
          </svg>
        </div>
        <div className="w-[1813px] shrink-0 flex flex-col overflow-hidden bg-white">
          <GridHeader />
          <div className="w-[1606px]">
            {rows.map((r, i) => (
              <GridRow key={i} r={r} />
            ))}
          </div>
        </div>
        <div className="w-[17px] shrink-0 bg-[#fafafa] border-l border-[#eeeeee] flex flex-col items-center pt-[7px] pb-[7px]">
          <svg width="11" height="6" viewBox="0 0 11 6"><path d="M0 6h11L5.500 0z" fill="#4a5578" /></svg>
          <div className="mt-[408px] w-[14px] h-[341px] bg-[#9a9a9a] rounded-[2px]" />
          <svg width="11" height="6" viewBox="0 0 11 6" className="mt-auto"><path d="M0 0h11L5.500 6z" fill="#4a5578" /></svg>
        </div>
        <div className="w-[43px] bg-[#955ba0] shrink-0 pt-[11px] pl-[5px] flex items-start gap-[4px]">
          <svg width="8" height="14" viewBox="0 0 8 14" fill="none" stroke="#fff" strokeWidth="2" className="mt-[4px]">
            <path d="M7 1L1 7l6 6" />
          </svg>
          <svg width="18" height="24" viewBox="0 0 18 24" fill="none" stroke="#fff">
            <rect x=".5" y=".5" width="17" height="23" />
            <path d="M6 5h9M6 9h9M6 13h9M6 17h9M3 5h1M3 9h1M3 13h1M3 17h1" />
          </svg>
        </div>
      </div>

      <div className="h-[20px] shrink-0 bg-gradient-to-b from-[#f7f7f7] to-white pl-[7px] flex items-center text-[12px] text-[#222] tracking-[-0.05px]">
        Rows Loaded: 89 | Rows Displayed: 68 | Rows Hidden: 21 | Rows Selected: 11
      </div>
      <div className="h-[20px] shrink-0 bg-[#d0d0d0] pl-[5px] flex items-center text-[12px] text-[#444]">
        <span className="tracking-[-0.37px]">Load detailed information for the selected entries only.This includes information such as external sender status, Team information, expiration policy status and more.</span>
        <div className="ml-auto flex text-[#aaaaaa]">
          <div className="w-[33px]">CAP</div>
          <div className="w-[38px]">NUM</div>
          <div className="w-[34px]">SCRL</div>
        </div>
      </div>
      <div className="h-[3px] shrink-0 bg-[#333333] flex">
        <div className="ml-[49px] w-[286px] bg-white" />
        <div className="ml-[151px] w-[44px] bg-[#666666]" />
      </div>

      <Tooltip />
      <Dialog />
    </div>
  );
}
